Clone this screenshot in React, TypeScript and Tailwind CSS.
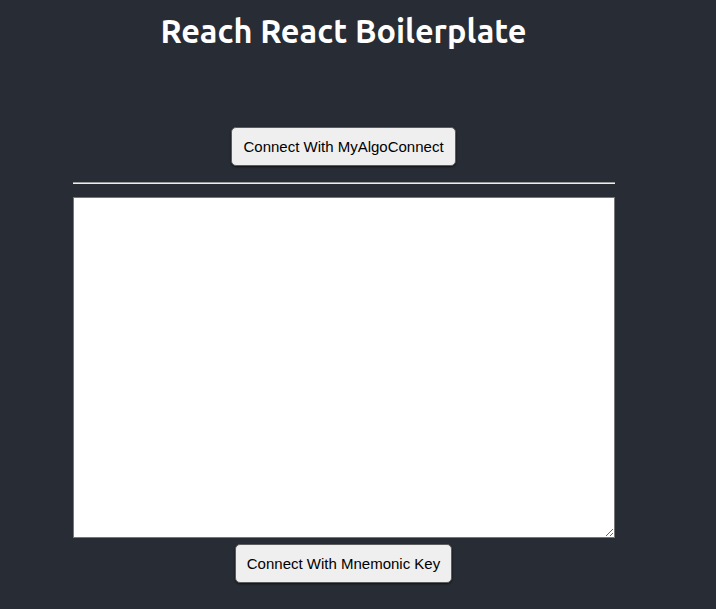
import React from 'react';

const btn =
  'rounded-[5px] border border-[#5c5c5c] bg-[#efefef] px-[11px] py-[9px] text-[15px] leading-[19px] text-black shadow-[0_1px_2px_rgba(0,0,0,0.6)]';

const App = () => {
  return (
    <div className="min-h-[609px] w-full bg-[#282c34] font-['Liberation_Sans',Arial,sans-serif]">
      <div className="flex w-[687px] flex-col items-center">
        <h1 className="mt-[12px] font-['Ubuntu','Lato',sans-serif] text-[32.5px] font-bold leading-[38px] text-white">
          Reach React Boilerplate
        </h1>
        <button className={`${btn} mt-[77px]`}>Connect With MyAlgoConnect</button>
        <div className="mt-[16px] h-[2px] w-[542px] border-t border-b border-t-[#9a9a9a] border-b-[#eeeeee]" />
        <textarea className="mt-[13px] h-[341px] w-[542px] border border-[#767676] bg-white" />
        <button className={`${btn} mt-[6px]`}>Connect With Mnemonic Key</button>
      </div>
    </div>
  );
};

export default App;
